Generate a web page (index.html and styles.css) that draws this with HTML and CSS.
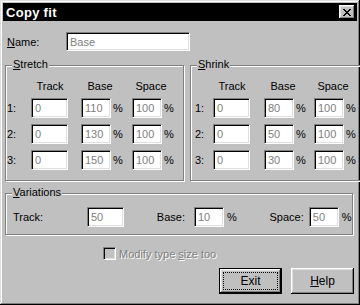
FILE: index.html
```html
<!DOCTYPE html>
<html>
<head>
  <meta charset="UTF-8">
  <title>Copy fit</title>
  <link rel="stylesheet" href="styles.css">
</head>
<body>
  <div class="window">
    <div class="titlebar">
      <span class="title">Copy fit</span>
      <button type="button" class="close-btn" aria-label="Close">
        <svg width="8" height="7" viewBox="0 0 8 7" shape-rendering="crispEdges">
          <path fill="#000" d="M0 0h2v1H0z M6 0h2v1H6z M1 1h2v1H1z M5 1h2v1H5z M2 2h4v1H2z M3 3h2v1H3z M2 4h4v1H2z M1 5h2v1H1z M5 5h2v1H5z M0 6h2v1H0z M6 6h2v1H6z"/>
        </svg>
      </button>
    </div>

    <div class="content">
      <div class="name-row">
        <label class="name-label" for="name"><u>N</u>ame:</label>
        <input id="name" class="field name-field" value="Base" readonly>
      </div>

      <div class="groups">
        <!-- Stretch -->
        <div class="group stretch">
          <div class="group-title"><u>S</u>tretch</div>
          <div class="fit-grid">
            <span></span>
            <span class="col-head">Track</span>
            <span class="col-head">Base</span>
            <span class="col-head">Space</span>

            <span class="row-label">1:</span>
            <span class="cell"><input class="field track-field" value="0" readonly></span>
            <span class="cell"><input class="field pct-field" value="110" readonly><span class="pct">%</span></span>
            <span class="cell"><input class="field pct-field" value="100" readonly><span class="pct">%</span></span>

            <span class="row-label">2:</span>
            <span class="cell"><input class="field track-field" value="0" readonly></span>
            <span class="cell"><input class="field pct-field" value="130" readonly><span class="pct">%</span></span>
            <span class="cell"><input class="field pct-field" value="100" readonly><span class="pct">%</span></span>

            <span class="row-label">3:</span>
            <span class="cell"><input class="field track-field" value="0" readonly></span>
            <span class="cell"><input class="field pct-field" value="150" readonly><span class="pct">%</span></span>
            <span class="cell"><input class="field pct-field" value="100" readonly><span class="pct">%</span></span>
          </div>
        </div>

        <!-- Shrink -->
        <div class="group shrink">
          <div class="group-title"><u>S</u>hrink</div>
          <div class="fit-grid">
            <span></span>
            <span class="col-head">Track</span>
            <span class="col-head">Base</span>
            <span class="col-head">Space</span>

            <span class="row-label">1:</span>
            <span class="cell"><input class="field track-field" value="0" readonly></span>
            <span class="cell"><input class="field pct-field" value="80" readonly><span class="pct">%</span></span>
            <span class="cell"><input class="field pct-field" value="100" readonly><span class="pct">%</span></span>

            <span class="row-label">2:</span>
            <span class="cell"><input class="field track-field" value="0" readonly></span>
            <span class="cell"><input class="field pct-field" value="50" readonly><span class="pct">%</span></span>
            <span class="cell"><input class="field pct-field" value="100" readonly><span class="pct">%</span></span>

            <span class="row-label">3:</span>
            <span class="cell"><input class="field track-field" value="0" readonly></span>
            <span class="cell"><input class="field pct-field" value="30" readonly><span class="pct">%</span></span>
            <span class="cell"><input class="field pct-field" value="100" readonly><span class="pct">%</span></span>
          </div>
        </div>
      </div>

      <!-- Variations -->
      <div class="group variations">
        <div class="group-title"><u>V</u>ariations</div>
        <div class="var-row">
          <span class="var-track-label">Track:</span>
          <input class="field track-field" value="50" readonly>
          <span class="var-label base-label">Base:</span>
          <input class="field pct-field" value="10" readonly>
          <span class="pct var-pct">%</span>
          <span class="var-label space-label">Space:</span>
          <input class="field pct-field" value="50" readonly>
          <span class="pct var-pct">%</span>
        </div>
      </div>

      <div class="check-row">
        <span class="checkbox"></span>
        <span class="check-text">Modify type <u>s</u>ize too</span>
      </div>

      <div class="buttons">
        <button type="button" class="btn btn-default">Exit</button>
        <button type="button" class="btn"><u>H</u>elp</button>
      </div>
    </div>
  </div>
</body>
</html>
```

FILE: styles.css
```css
* {
  box-sizing: border-box;
}
body {
  margin: 0;
  font-family: "Liberation Sans", Arial, sans-serif;
  font-size: 11px;
  color: #000;
  background: #c0c0c0;
}
.window {
  width: 360px;
  height: 305px;
  padding: 3px;
  background: #c0c0c0;
  box-shadow: inset -1px -1px #000, inset 1px 1px #dfdfdf, inset -2px -2px #808080, inset 2px 2px #fff;
}
.titlebar {
  height: 18px;
  background: #000;
  color: #fff;
  display: flex;
  align-items: center;
  justify-content: space-between;
  padding: 0 2px 0 3px;
}
.title {
  font-size: 13px;
  font-weight: bold;
  letter-spacing: 0.3px;
}
.close-btn {
  width: 16px;
  height: 14px;
  padding: 0;
  border: none;
  background: #c0c0c0;
  box-shadow: inset -1px -1px #000, inset 1px 1px #fff, inset -2px -2px #808080, inset 2px 2px #dfdfdf;
  display: flex;
  align-items: center;
  justify-content: center;
}
.content {
  padding: 0 4px 0 2px;
}
.name-row {
  display: flex;
  align-items: center;
  margin-top: 11px;
  padding-left: 2px;
}
.name-label {
  width: 59px;
}
.field {
  height: 20px;
  border: 1px solid;
  border-color: #808080 #fff #fff #808080;
  box-shadow: inset 1px 1px #000, inset -1px -1px #dfdfdf;
  background: #fff;
  color: #808080;
  font: inherit;
  padding: 0 3px;
  outline: none;
}
.name-field {
  width: 124px;
  height: 19px;
}
.track-field {
  width: 37px;
}
.pct-field {
  width: 30px;
}
.groups {
  display: flex;
  gap: 6px;
  margin-top: 14px;
}
.group {
  position: relative;
  border: 1px solid #808080;
  box-shadow: inset 1px 1px #fff, 1px 1px #fff;
}
.group-title {
  position: absolute;
  top: -8px;
  left: 6px;
  padding: 0 1px;
  line-height: 13px;
  background: #c0c0c0;
}
.stretch {
  flex: 0 0 172px;
  padding: 14px 0 10px 1px;
}
.shrink {
  flex: 1;
  padding: 14px 0 10px 4px;
}
.fit-grid {
  display: grid;
  grid-template-columns: 24px 50px 51px 51px;
  grid-template-rows: 12px repeat(3, 20px);
  row-gap: 6px;
  align-items: center;
}
.shrink .fit-grid {
  grid-template-columns: 18px 51px 50px 51px;
}
.col-head {
  width: 38px;
  text-align: center;
  line-height: 12px;
}
.cell {
  display: flex;
  align-items: center;
}
.pct {
  margin-left: 2px;
}
.variations {
  margin-top: 12px;
  padding: 13px 0 7px 7px;
}
.var-row {
  display: flex;
  align-items: center;
}
.var-track-label {
  width: 74px;
}
.var-label {
  text-align: right;
}
.base-label {
  width: 70px;
  padding-right: 9px;
}
.space-label {
  width: 72px;
  padding-right: 5px;
}
.var-pct {
  margin-left: 3px;
}
.check-row {
  display: flex;
  align-items: center;
  height: 13px;
  margin-top: 12px;
  padding-left: 98px;
}
.checkbox {
  width: 13px;
  height: 13px;
  border: 1px solid;
  border-color: #808080 #fff #fff #808080;
  box-shadow: inset 1px 1px #000, inset -1px -1px #dfdfdf;
  background: #c0c0c0;
}
.check-text {
  margin-left: 3px;
  color: #808080;
  text-shadow: 1px 1px #fff;
}
.buttons {
  display: flex;
  justify-content: flex-end;
  gap: 9px;
  margin-top: 8px;
  margin-right: -1px;
}
.btn {
  width: 63px;
  height: 26px;
  padding: 0;
  border: none;
  background: #c0c0c0;
  color: #000;
  font: inherit;
  font-size: 12px;
  box-shadow: inset -1px -1px #000, inset 1px 1px #fff, inset -2px -2px #808080, inset 2px 2px #dfdfdf;
}
.btn-default {
  border: 1px solid #000;
  outline: 1px dotted #000;
  outline-offset: -5px;
}
```
